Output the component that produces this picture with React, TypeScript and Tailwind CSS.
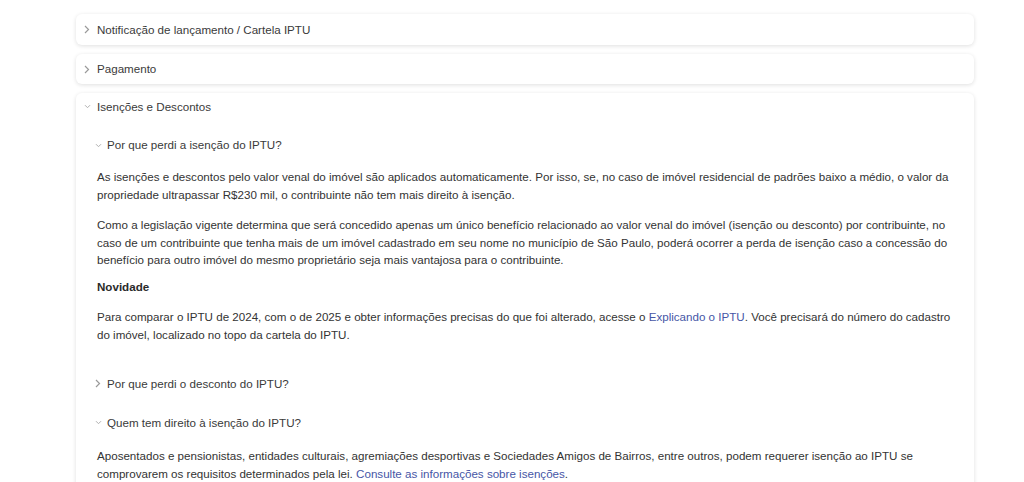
import React from 'react';

const font = { fontFamily: '"Liberation Sans", Arial, sans-serif' };

const ChevronRight = () => (
  <svg width="6" height="9" viewBox="0 0 6 9" className="shrink-0">
    <path d="M1 1l3.5 3.5L1 8" fill="none" stroke="#9a9a9a" strokeWidth="1.2" />
  </svg>
);

const ChevronDown = () => (
  <svg width="7" height="5" viewBox="0 0 7 5" className="shrink-0">
    <path d="M1 1.2l2.5 2.5L6 1.2" fill="none" stroke="#b0b0b0" strokeWidth="1" />
  </svg>
);

const Card: React.FC<{ children: React.ReactNode; className?: string }> = ({ children, className }) => (
  <div className={`bg-white rounded-[6px] shadow-[0_1px_4px_rgba(0,0,0,0.13)] ${className ?? ''}`}>{children}</div>
);

const Link: React.FC<{ children: React.ReactNode }> = ({ children }) => (
  <a href="#" className="text-[#4656a6]">{children}</a>
);

export default function App() {
  return (
    <div className="w-[1024px] h-[482px] overflow-hidden bg-white text-[11.6px] leading-[18px] text-[#333]" style={font}>
      <div className="ml-[76px] w-[898px] pt-[14px] flex flex-col gap-[9px]">
        <Card>
          <div className="h-[31px] flex items-center pl-[8px] gap-[7px] text-[#3a3a3a]">
            <ChevronRight />
            <span>Notificação de lançamento / Cartela IPTU</span>
          </div>
        </Card>
        <Card>
          <div className="h-[30px] flex items-center pl-[8px] gap-[7px] text-[#3a3a3a]">
            <ChevronRight />
            <span>Pagamento</span>
          </div>
        </Card>
        <Card className="h-[420px]">
          <div className="h-[27px] flex items-center pl-[8px] gap-[6px] text-[#3a3a3a]">
            <ChevronDown />
            <span>Isenções e Descontos</span>
          </div>

          <div className="pl-[21px] pr-[16px]">
            <div className="mt-[16px] h-[18px] flex items-center gap-[5px] -ml-[2px] text-[#3a3a3a]">
              <ChevronDown />
              <span>Por que perdi a isenção do IPTU?</span>
            </div>

            <p className="mt-[14px]">
              As isenções e descontos pelo valor venal do imóvel são aplicados automaticamente. Por isso, se, no caso de imóvel residencial de padrões baixo a médio, o valor da propriedade ultrapassar R$230 mil, o contribuinte não tem mais direito à isenção.
            </p>
            <p className="mt-[12px] leading-[17.5px]">
              Como a legislação vigente determina que será concedido apenas um único benefício relacionado ao valor venal do imóvel (isenção ou desconto) por contribuinte, no caso de um contribuinte que tenha mais de um imóvel cadastrado em seu nome no município de São Paulo, poderá ocorrer a perda de isenção caso a concessão do benefício para outro imóvel do mesmo proprietário seja mais vantajosa para o contribuinte.
            </p>
            <p className="mt-[9px] font-bold text-[#2a2a2a]">Novidade</p>
            <p className="mt-[12px]">
              Para comparar o IPTU de 2024, com o de 2025 e obter informações precisas do que foi alterado, acesse o <Link>Explicando o IPTU</Link>. Você precisará do número do cadastro do imóvel, localizado no topo da cartela do IPTU.
            </p>

            <div className="mt-[31px] h-[18px] flex items-center gap-[6px] -ml-[2px] text-[#3a3a3a]">
              <ChevronRight />
              <span>Por que perdi o desconto do IPTU?</span>
            </div>

            <div className="mt-[21px] h-[18px] flex items-center gap-[5px] -ml-[2px] text-[#3a3a3a]">
              <ChevronDown />
              <span>Quem tem direito à isenção do IPTU?</span>
            </div>

            <p className="mt-[15px]">
              Aposentados e pensionistas, entidades culturais, agremiações desportivas e Sociedades Amigos de Bairros, entre outros, podem requerer isenção ao IPTU se comprovarem os requisitos determinados pela lei. <Link>Consulte as informações sobre isenções</Link>.
            </p>
          </div>
        </Card>
      </div>
    </div>
  );
}
